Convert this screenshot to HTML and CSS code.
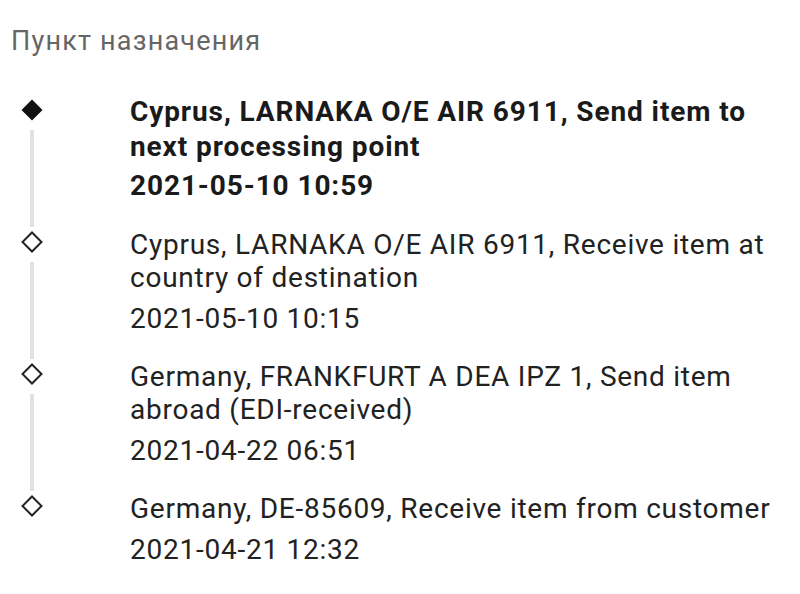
FILE: index.html
```html
<!DOCTYPE html>
<html lang="ru">
<head>
<meta charset="utf-8">
<link rel="stylesheet" href="styles.css">
</head>
<body>
<div class="page">
  <div class="header">Пункт назначения</div>
  <ul class="timeline">
    <li class="item current">
      <div class="marker">
        <svg class="diamond" width="22" height="22" viewBox="0 0 22 22"><polygon points="11,0.5 21.5,11 11,21.5 0.5,11" fill="#111"/></svg>
        <div class="rail"></div>
      </div>
      <div class="content">
        <div class="title">Cyprus, LARNAKA O/E AIR 6911, Send item to next processing point</div>
        <div class="date">2021-05-10 10:59</div>
      </div>
    </li>
    <li class="item">
      <div class="marker">
        <svg class="diamond" width="22" height="22" viewBox="0 0 22 22"><polygon points="11,1.5 20.5,11 11,20.5 1.5,11" fill="none" stroke="#222" stroke-width="2"/></svg>
        <div class="rail"></div>
      </div>
      <div class="content">
        <div class="title">Cyprus, LARNAKA O/E AIR 6911, Receive item at country of destination</div>
        <div class="date">2021-05-10 10:15</div>
      </div>
    </li>
    <li class="item">
      <div class="marker">
        <svg class="diamond" width="22" height="22" viewBox="0 0 22 22"><polygon points="11,1.5 20.5,11 11,20.5 1.5,11" fill="none" stroke="#222" stroke-width="2"/></svg>
        <div class="rail"></div>
      </div>
      <div class="content">
        <div class="title">Germany, FRANKFURT A DEA IPZ 1, Send item abroad (EDI-received)</div>
        <div class="date">2021-04-22 06:51</div>
      </div>
    </li>
    <li class="item last">
      <div class="marker">
        <svg class="diamond" width="22" height="22" viewBox="0 0 22 22"><polygon points="11,1.5 20.5,11 11,20.5 1.5,11" fill="none" stroke="#222" stroke-width="2"/></svg>
      </div>
      <div class="content">
        <div class="title">Germany, DE-85609, Receive item from customer</div>
        <div class="date">2021-04-21 12:32</div>
      </div>
    </li>
  </ul>
</div>
</body>
</html>
```
FILE: styles.css
```css
* { box-sizing: border-box; }
html, body { margin: 0; padding: 0; background: #fff; }
body { font-family: Roboto, "Noto Sans", "Liberation Sans", sans-serif; color: #222; }
.page { width: 800px; height: 594px; overflow: hidden; }
.header {
  padding: 25px 0 0 11px;
  height: 94px;
  font-size: 27px;
  line-height: 32px;
  letter-spacing: 1.2px;
  color: #666;
}
.timeline { list-style: none; margin: 0; padding: 0; }
.item {
  display: grid;
  grid-template-columns: 130px 1fr;
  height: 132px;
}
.item.last { height: auto; }
.marker {
  display: flex;
  flex-direction: column;
  align-items: flex-start;
  padding-left: 21px;
  padding-top: 5px;
}
.diamond { display: block; flex: none; }
.rail {
  width: 4px;
  margin-left: 9px;
  margin-top: 9px;
  margin-bottom: -1px;
  flex: 1;
  background: #e2e2e2;
}
.content { padding-right: 8px; padding-top: 2px; }
.title {
  font-size: 28px;
  line-height: 33px;
  letter-spacing: 0.75px;
}
.date {
  font-size: 28px;
  line-height: 34px;
  letter-spacing: 0.75px;
  margin-top: 8px;
}
.current .content { padding-top: 0; }
.current .title { line-height: 35px; }
.current .date { margin-top: 5px; }
.current .title, .current .date { font-weight: 700; color: #1a1a1a; letter-spacing: 0.9px; }
```
